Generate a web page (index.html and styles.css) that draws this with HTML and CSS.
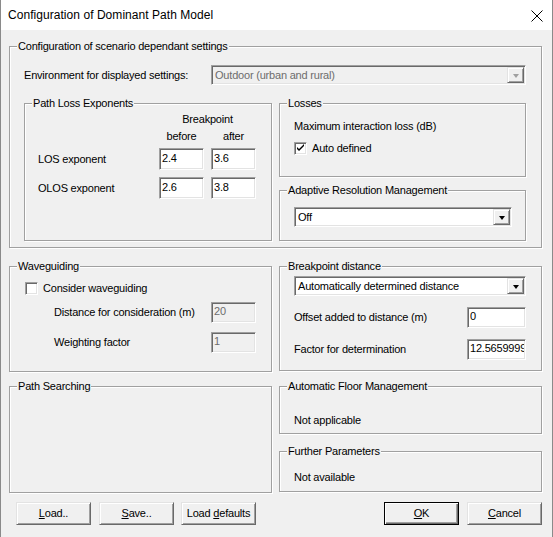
FILE: index.html
```html
<!DOCTYPE html>
<html>
<head>
<meta charset="utf-8">
<title>Configuration of Dominant Path Model</title>
<link rel="stylesheet" href="styles.css">
</head>
<body>
<div class="window">
  <div class="titlebar">
    <span class="title">Configuration of Dominant Path Model</span>
    <svg class="close" width="12" height="12" viewBox="0 0 12 12"><path d="M0.5 0.5 L11.5 11.5 M11.5 0.5 L0.5 11.5" stroke="#000" stroke-width="1" fill="none"/></svg>
  </div>
  <div class="content">
    <div class="grp main">
      <span class="lg">Configuration of scenario dependant settings</span>
      <div class="env-row">
        <span class="env-label">Environment for displayed settings:</span>
        <div class="combo disabled"><span class="combo-text">Outdoor (urban and rural)</span><span class="arrow"><i class="tri"></i></span></div>
      </div>
      <div class="main-grid">
        <div class="grp pathloss">
          <span class="lg">Path Loss Exponents</span>
          <div class="pl-head">Breakpoint</div>
          <div class="pl-sub"><span>before</span><span>after</span></div>
          <div class="pl-row first"><span class="pl-label">LOS exponent</span><input class="ed w45" type="text" value="2.4"><input class="ed w45" type="text" value="3.6"></div>
          <div class="pl-row"><span class="pl-label">OLOS exponent</span><input class="ed w45" type="text" value="2.6"><input class="ed w45" type="text" value="3.8"></div>
        </div>
        <div class="rcol">
          <div class="grp losses">
            <span class="lg">Losses</span>
            <div class="line">Maximum interaction loss (dB)</div>
            <div class="chk-row"><span class="chk"><svg width="9" height="9" viewBox="0 0 9 9"><path d="M1 3 L1 5 L3 7 L8 2 L8 0 L3 5 Z" fill="#000"/></svg></span><span>Auto defined</span></div>
          </div>
          <div class="grp adaptive">
            <span class="lg">Adaptive Resolution Management</span>
            <div class="combo"><span class="combo-text">Off</span><span class="arrow"><i class="tri"></i></span></div>
          </div>
        </div>
      </div>
    </div>

    <div class="lower">
      <div class="col">
        <div class="grp wave">
          <span class="lg">Waveguiding</span>
          <div class="chk-row"><span class="chk"></span><span>Consider waveguiding</span></div>
          <div class="field-row r1"><span class="fl">Distance for consideration (m)</span><input class="ed w45" type="text" value="20" disabled></div>
          <div class="field-row r2"><span class="fl">Weighting factor</span><input class="ed w45" type="text" value="1" disabled></div>
        </div>
        <div class="grp search">
          <span class="lg">Path Searching</span>
        </div>
      </div>
      <div class="col">
        <div class="grp bpd">
          <span class="lg">Breakpoint distance</span>
          <div class="combo"><span class="combo-text">Automatically determined distance</span><span class="arrow"><i class="tri"></i></span></div>
          <div class="field-row r1"><span class="fl">Offset added to distance (m)</span><input class="ed w59" type="text" value="0"></div>
          <div class="field-row r2"><span class="fl">Factor for determination</span><input class="ed w59" type="text" value="12.5659999"></div>
        </div>
        <div class="grp floor">
          <span class="lg">Automatic Floor Management</span>
          <div class="note">Not applicable</div>
        </div>
        <div class="grp further">
          <span class="lg">Further Parameters</span>
          <div class="note">Not available</div>
        </div>
      </div>
    </div>

    <div class="buttons">
      <div class="bgroup">
        <button class="btn"><u>L</u>oad..</button>
        <button class="btn b2"><u>S</u>ave..</button>
        <button class="btn b3">Load <u>d</u>efaults</button>
      </div>
      <div class="bgroup">
        <button class="btn default"><u>O</u>K</button>
        <button class="btn b2"><u>C</u>ancel</button>
      </div>
    </div>
  </div>
</div>
</body>
</html>
```
FILE: styles.css
```css
* { box-sizing: border-box; }
html, body { margin: 0; padding: 0; background: #f0f0f0; }
body {
  font-family: "Liberation Sans", Arial, sans-serif;
  font-size: 11px;
  line-height: 13px;
  letter-spacing: -0.2px;
  color: #000;
}
.window {
  width: 553px;
  height: 537px;
  background: #f0f0f0;
  border-left: 1px solid #8a8a8a;
  border-right: 1px solid #8a8a8a;
  display: flex;
  flex-direction: column;
}
.titlebar {
  height: 30px;
  background: #fff;
  display: flex;
  align-items: center;
  justify-content: space-between;
  padding: 0 9px 0 7px;
  flex: none;
}
.title { font-size: 12px; line-height: 16px; letter-spacing: 0.05px; }
.close { display: block; margin-top: 1px; }
.content { padding: 16px 10px 0 8px; }

/* group boxes */
.grp {
  position: relative;
  border: 1px solid #a0a0a0;
  box-shadow: inset 1px 1px 0 #fff, 1px 1px 0 #fff;
}
.grp > .lg {
  position: absolute;
  top: -7px;
  left: 7px;
  padding: 0 1px;
  background: #f0f0f0;
  line-height: 13px;
  white-space: nowrap;
}

.main { height: 202px; padding: 18px 15px 0 14px; }
.env-row { display: flex; align-items: center; height: 20px; }
.env-label { width: 187px; flex: none; }
.env-row .combo { flex: 1; }

.main-grid {
  margin-top: 18px;
  display: grid;
  grid-template-columns: 248px 247px;
  column-gap: 7px;
}
.pathloss { height: 138px; padding-top: 9px; }
.pl-head { margin-left: 134px; width: 97px; text-align: center; }
.pl-sub { margin-top: 4px; margin-left: 134px; display: flex; gap: 7px; }
.pl-sub span { width: 45px; text-align: center; }
.pl-row { display: flex; align-items: center; gap: 7px; margin-top: 7px; }
.pl-row.first { margin-top: 5px; }
.pl-row .pl-label { width: 127px; padding-left: 13px; }

.rcol { display: flex; flex-direction: column; }
.losses { height: 74px; padding: 16px 0 0 14px; }
.chk-row { display: flex; align-items: center; height: 13px; }
.losses .chk-row { margin-top: 9px; }
.chk {
  width: 13px; height: 13px; flex: none;
  background: #fff;
  border: 1px solid;
  border-color: #a0a0a0 #fff #fff #a0a0a0;
  box-shadow: inset 1px 1px 0 #696969, inset -1px -1px 0 #e3e3e3;
  display: flex; align-items: center; justify-content: center;
  margin-right: 5px;
}
.chk svg { display: block; }
.adaptive { height: 51px; margin-top: 13px; padding: 16px 13px 0 14px; }

/* combo */
.combo {
  height: 20px;
  background: #fff;
  border: 1px solid;
  border-color: #a0a0a0 #fff #fff #a0a0a0;
  box-shadow: inset 1px 1px 0 #696969, inset -1px -1px 0 #e3e3e3;
  display: flex;
  align-items: stretch;
  padding: 1px;
}
.combo-text { flex: 1; padding-left: 2px; line-height: 16px; white-space: nowrap; overflow: hidden; }
.arrow {
  width: 17px; flex: none;
  background: #f0f0f0;
  border: 1px solid;
  border-color: #e3e3e3 #696969 #696969 #e3e3e3;
  box-shadow: inset 1px 1px 0 #fff, inset -1px -1px 0 #a0a0a0;
  display: flex; align-items: center; justify-content: center;
}
.tri {
  display: block; width: 0; height: 0;
  border-left: 3.5px solid transparent;
  border-right: 3.5px solid transparent;
  border-top: 4px solid #000;
  margin-top: 1px;
}
.combo.disabled { background: #f0f0f0; }
.combo.disabled .combo-text { color: #6d6d6d; }
.combo.disabled .tri { border-top-color: #a0a0a0; }

/* edits */
.ed {
  font-family: "Liberation Sans", Arial, sans-serif;
  font-size: 11px;
  letter-spacing: -0.2px;
  color: #000;
  height: 22px;
  padding: 0 1px 3px 2px;
  margin: 0;
  background: #fff;
  border: 1px solid;
  border-color: #a0a0a0 #fff #fff #a0a0a0;
  box-shadow: inset 1px 1px 0 #696969, inset -1px -1px 0 #e3e3e3;
  outline: none;
  flex: none;
}
.ed:disabled { background: #f0f0f0; color: #6d6d6d; -webkit-text-fill-color: #6d6d6d; }
.w45 { width: 45px; }
.w59 { width: 59px; }

/* lower */
.lower {
  margin-top: 18px;
  display: grid;
  grid-template-columns: 263px 263px;
  column-gap: 7px;
}
.col { display: flex; flex-direction: column; }
.wave { height: 106px; padding: 15px 0 0 15px; }
.field-row { display: flex; align-items: center; }
.field-row .ed { height: 21px; }
.wave .field-row .fl { width: 157px; }
.wave .field-row { padding-left: 29px; }
.wave .r1 { margin-top: 7px; }
.wave .r2 { margin-top: 9px; }
.search { height: 107px; margin-top: 14px; }

.bpd { height: 105px; padding: 9px 15px 0 14px; }
.bpd .field-row { justify-content: space-between; margin-top: 11px; }
.floor { height: 48px; margin-top: 15px; padding: 27px 0 0 14px; }
.further { height: 41px; margin-top: 17px; padding: 19px 0 0 14px; }

/* buttons */
.buttons {
  margin-top: 9px;
  display: flex;
  justify-content: space-between;
  padding-left: 7px;
}
.bgroup { display: flex; }
.btn {
  width: 75px;
  height: 23px;
  margin: 0;
  padding: 0 0 1px;
  font-family: "Liberation Sans", Arial, sans-serif;
  font-size: 11px;
  letter-spacing: -0.2px;
  color: #000;
  background: #f0f0f0;
  border: 1px solid;
  border-color: #e3e3e3 #696969 #696969 #e3e3e3;
  box-shadow: inset 1px 1px 0 #fff, inset -1px -1px 0 #a0a0a0;
}
.btn.b2 { margin-left: 8px; }
.btn.b3 { margin-left: 7px; }
.btn.default {
  border-color: #000;
  box-shadow: inset 1px 1px 0 #fff, inset -1px -1px 0 #696969, inset -2px -2px 0 #a0a0a0;
}
```
